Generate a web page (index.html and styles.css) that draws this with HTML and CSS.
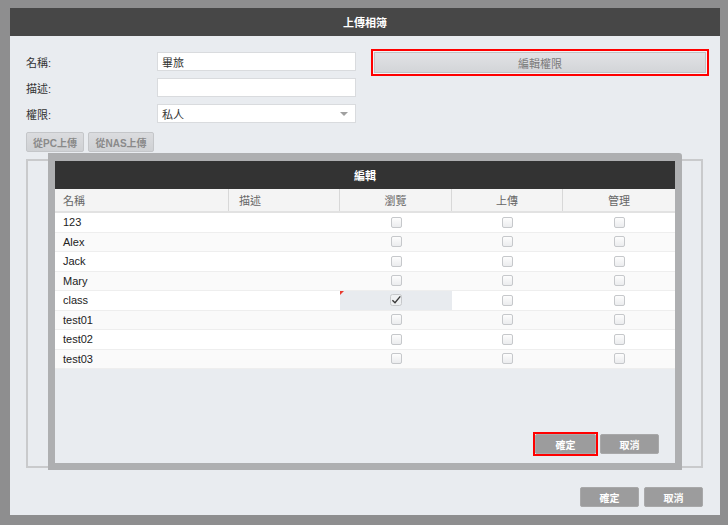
FILE: index.html
```html
<!DOCTYPE html>
<html lang="zh-Hant">
<head>
<meta charset="utf-8">
<title>上傳相簿</title>
<link rel="stylesheet" href="styles.css">
</head>
<body>
<div class="dialog">
  <div class="titlebar">上傳相簿</div>
  <div class="body">
    <div class="form">
      <div class="lbl">名稱:</div>
      <div class="input">畢旅</div>
      <div class="edit-wrap"><div class="edit-btn">編輯權限</div></div>
      <div class="lbl">描述:</div>
      <div class="input"></div>
      <div class="lbl">權限:</div>
      <div class="input select"><span>私人</span><span class="arrow"></span></div>
    </div>
    <div class="uploads">
      <div class="ubtn pc">從PC上傳</div>
      <div class="ubtn nas">從NAS上傳</div>
    </div>
    <div class="panel"></div>
    <div class="actions">
      <div class="abtn">確定</div>
      <div class="abtn">取消</div>
    </div>
  </div>

  <div class="overlay">
    <div class="ov-head">編輯</div>
    <div class="grid colhead">
      <div class="c left">名稱</div>
      <div class="c left">描述</div>
      <div class="c mid">瀏覽</div>
      <div class="c mid">上傳</div>
      <div class="c mid last">管理</div>
    </div>
    <div class="grid row">
      <div class="c left">123</div><div class="c"></div>
      <div class="c mid"><span class="cb"></span></div><div class="c mid"><span class="cb"></span></div><div class="c mid"><span class="cb"></span></div>
    </div>
    <div class="grid row alt">
      <div class="c left">Alex</div><div class="c"></div>
      <div class="c mid"><span class="cb"></span></div><div class="c mid"><span class="cb"></span></div><div class="c mid"><span class="cb"></span></div>
    </div>
    <div class="grid row">
      <div class="c left">Jack</div><div class="c"></div>
      <div class="c mid"><span class="cb"></span></div><div class="c mid"><span class="cb"></span></div><div class="c mid"><span class="cb"></span></div>
    </div>
    <div class="grid row alt">
      <div class="c left">Mary</div><div class="c"></div>
      <div class="c mid"><span class="cb"></span></div><div class="c mid"><span class="cb"></span></div><div class="c mid"><span class="cb"></span></div>
    </div>
    <div class="grid row">
      <div class="c left">class</div><div class="c"></div>
      <div class="c mid selected"><span class="dirty"></span>
        <svg class="cbx" width="12" height="12" viewBox="0 0 12 12"><rect x="0.5" y="0.5" width="11" height="11" rx="2" fill="#eef0f2" stroke="#c6c8cb"/><path d="M2.4 6.2 L5 8.7 L10.3 2.4" fill="none" stroke="#3a3a3a" stroke-width="1.4"/></svg>
      </div>
      <div class="c mid"><span class="cb"></span></div><div class="c mid"><span class="cb"></span></div>
    </div>
    <div class="grid row alt">
      <div class="c left">test01</div><div class="c"></div>
      <div class="c mid"><span class="cb"></span></div><div class="c mid"><span class="cb"></span></div><div class="c mid"><span class="cb"></span></div>
    </div>
    <div class="grid row">
      <div class="c left">test02</div><div class="c"></div>
      <div class="c mid"><span class="cb"></span></div><div class="c mid"><span class="cb"></span></div><div class="c mid"><span class="cb"></span></div>
    </div>
    <div class="grid row alt">
      <div class="c left">test03</div><div class="c"></div>
      <div class="c mid"><span class="cb"></span></div><div class="c mid"><span class="cb"></span></div><div class="c mid"><span class="cb"></span></div>
    </div>
    <div class="ov-space"></div>
    <div class="ov-actions">
      <div class="ok-wrap"><div class="abtn ok">確定</div></div>
      <div class="abtn cancel">取消</div>
    </div>
  </div>
</div>
</body>
</html>
```

FILE: styles.css
```css
* { box-sizing: border-box; }
html, body { margin: 0; padding: 0; }
body {
  width: 728px;
  height: 525px;
  overflow: hidden;
  background: #8e8e8f;
  font-family: "Liberation Sans", "Noto Sans CJK TC", sans-serif;
  font-size: 11px;
  color: #333;
  padding: 8px 8px 10px 10px;
}
.dialog {
  position: relative;
  width: 710px;
  height: 507px;
  background: #e9ecf0;
}
.titlebar {
  height: 28px;
  background: #474747;
  color: #fff;
  font-weight: bold;
  font-size: 11px;
  display: flex;
  align-items: center;
  justify-content: center;
}
.body {
  padding: 16px 11px 8px 16px;
}
.form {
  display: grid;
  grid-template-columns: 131px 199px 353px;
  grid-template-rows: 19px 19px 19px;
  row-gap: 7px;
  column-gap: 0;
}
.lbl {
  grid-column: 1;
  display: flex;
  align-items: center;
  color: #333;
  font-size: 11px;
}
.input {
  grid-column: 2;
  background: #fff;
  border: 1px solid #d9dbde;
  padding: 0 4px;
  display: flex;
  align-items: center;
  color: #333;
}
.select { justify-content: space-between; padding-right: 7px; }
.arrow {
  width: 0; height: 0;
  border-left: 4px solid transparent;
  border-right: 4px solid transparent;
  border-top: 4px solid #a0a0a0;
  margin-top: 1px;
}
.edit-wrap {
  grid-row: 1;
  grid-column: 3;
  margin-left: 15px;
  margin-top: -3px;
  height: 27px;
  align-self: start;
  border: 2px solid #ff0000;
  padding: 1px;
  background: #f2f3f5;
}
.edit-btn {
  height: 100%;
  background: linear-gradient(#e1e2e5, #d3d5d8);
  border: 1px solid #c2c4c7;
  color: #7a7a7a;
  display: flex;
  align-items: center;
  justify-content: center;
  font-size: 11px;
}
.uploads {
  margin-top: 9px;
  height: 20px;
  display: flex;
  gap: 4px;
}
.ubtn {
  height: 20px;
  background: linear-gradient(#dbdcdf, #cfd1d4);
  border: 1px solid #c4c6c9;
  border-radius: 2px;
  color: #8a8a8a;
  font-weight: bold;
  font-size: 10px;
  display: flex;
  align-items: center;
  justify-content: center;
}
.ubtn.pc { width: 58px; }
.ubtn.nas { width: 66px; }
.panel {
  margin-top: 7px;
  height: 309px;
  margin-right: 6px;
  border: 2px solid #c9cacc;
}
.actions {
  margin-top: 19px;
  margin-right: 6px;
  display: flex;
  justify-content: flex-end;
  gap: 5px;
}
.abtn {
  width: 59px;
  height: 20px;
  background: #9c9c9d;
  border: 1px solid #a8a8a9;
  border-radius: 2px;
  color: #fff;
  font-weight: bold;
  font-size: 10px;
  display: flex;
  align-items: center;
  justify-content: center;
}

/* overlay editor */
.overlay {
  position: absolute;
  left: 38px;
  top: 145px;
  width: 634px;
  height: 317px;
  border: 7px solid #aeafb1;
  border-top-width: 8px;
  border-radius: 0 3px 0 0;
  background: #e9ecf0;
  display: flex;
  flex-direction: column;
}
.ov-head {
  height: 28px;
  flex: none;
  background: #333;
  color: #fff;
  font-weight: bold;
  font-size: 11px;
  display: flex;
  align-items: center;
  justify-content: center;
}
.grid {
  display: grid;
  grid-template-columns: 174px 111px 112px 111px 1fr;
  flex: none;
}
.colhead {
  height: 24px;
  background: #f4f4f4;
  border-bottom: 2px solid #e2e2e2;
  color: #666;
}
.colhead .c {
  border-right: 1px solid #d8d8d8;
}
.colhead .c.last { border-right: none; }
.c {
  display: flex;
  align-items: center;
  position: relative;
}
.c.left { padding-left: 8px; }
.colhead .c.left + .c.left { padding-left: 10px; }
.c.mid { justify-content: center; }
.row {
  height: 19.5px;
  background: #fff;
  border-bottom: 1px solid #eeeeee;
  color: #222;
  font-size: 11px;
}
.row.alt { background: #fafafa; }
.cb {
  width: 11px;
  height: 11px;
  border: 1px solid #c6c8cb;
  border-radius: 2px;
  background: linear-gradient(#fdfdfd, #ebecee);
}
.selected { background: #e8ebef; }
.dirty {
  position: absolute;
  left: 0;
  top: 0;
  width: 0; height: 0;
  border-top: 4px solid #e83a2f;
  border-right: 4px solid transparent;
}
.ov-space { flex: 1; }
.ov-actions {
  flex: none;
  display: flex;
  justify-content: flex-end;
  align-items: center;
  gap: 2px;
  margin: 0 16px 7px 0;
}
.ok-wrap {
  border: 2px solid #ff0000;
  padding: 0;
  width: 65px;
  height: 24px;
}
.abtn.ok {
  width: 100%;
  height: 100%;
}
.abtn.cancel {
  width: 59px;
}
```
